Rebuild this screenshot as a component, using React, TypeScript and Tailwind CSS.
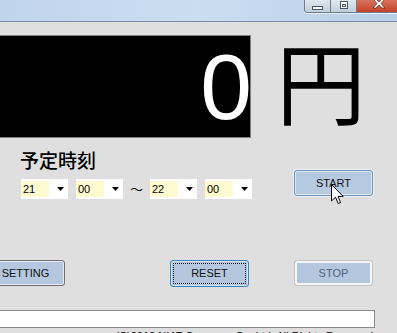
import React from "react";

function Combo({ v }: { v: string }) {
  return (
    <div className="w-[47px] h-[20px] bg-white flex items-center shrink-0">
      <div className="w-[28px] h-[16px] bg-[#fffad0] text-[11px] leading-[16px] pl-[2px] text-black">
        {v}
      </div>
      <svg className="ml-[8px]" width="7" height="4" viewBox="0 0 7 4">
        <path d="M0 0H7L3.5 4Z" fill="#000" />
      </svg>
    </div>
  );
}

function TitleBar() {
  return (
    <div className="h-[22px] border-b border-[#7a8ca0] bg-gradient-to-r from-[#bfd5ec] via-[#cadef1] to-[#b8cfe8] flex justify-end items-start">
      <div className="flex h-[13px] mr-[-3px] rounded-bl-[4px] overflow-hidden border-l border-b border-[#6e7c8c] shadow-[0_1px_0_#e6eef7]">
        <div className="w-[26px] h-full bg-gradient-to-b from-[#dfe6ee] to-[#c3cfdc] border-r border-[#6e7c8c] flex items-center justify-center">
          <div className="w-[11px] h-[4px] bg-white border border-[#4a5563] mt-[3px]" />
        </div>
        <div className="w-[26px] h-full bg-gradient-to-b from-[#dfe6ee] to-[#c3cfdc] border-r border-[#6e7c8c] flex items-start justify-center">
          <div className="w-[8px] h-[8px] bg-white border border-[#4a5563] mt-[1px] flex items-center justify-center">
            <div className="w-[4px] h-[3px] border border-[#4a5563]" />
          </div>
        </div>
        <div className="w-[43px] h-full bg-gradient-to-b from-[#d9735c] to-[#c33f27] flex items-start justify-center">
          <svg width="16" height="10" viewBox="0 0 16 10" className="mt-[-1px]">
            <path d="M2 0L6 4.5L2 9H5L8 6L11 9H14L10 4.5L14 0H11L8 3L5 0Z" fill="#fff" stroke="#5a2a22" strokeWidth="0.8" />
          </svg>
        </div>
      </div>
    </div>
  );
}

export default function App() {
  return (
    <div className="w-[397px] h-[333px] overflow-hidden bg-[#dfdfdf] relative font-['Liberation_Sans',Arial,sans-serif]">
      <TitleBar />
      <div className="flex items-start mt-[13px]">
        <div className="w-[251px] h-[103px] bg-black border-y border-r border-[#808080] flex items-center justify-end overflow-hidden shrink-0">
          <span className="text-white text-[93px] leading-[100px] mr-[-2px]">0</span>
        </div>
        <span className="ml-[25px] mt-[-1px] text-[90px] leading-none font-['Noto_Sans_CJK_JP',sans-serif] text-black">
          円
        </span>
      </div>
      <div className="mt-[12px] ml-[20px] h-[20px] text-[19px] leading-[20px] font-medium text-black font-['Noto_Sans_CJK_JP',sans-serif]">
        予定時刻
      </div>
      <div className="flex items-start">
        <div className="flex items-center mt-[9px] ml-[21px]">
          <Combo v="21" />
          <div className="ml-[8px]">
            <Combo v="00" />
          </div>
          <div className="w-[27px] text-center text-[13px] leading-[20px] text-black font-['Noto_Sans_CJK_JP',sans-serif]">～</div>
          <Combo v="22" />
          <div className="ml-[8px]">
            <Combo v="00" />
          </div>
        </div>
        <button className="ml-[42px] w-[79px] h-[26px] rounded-[3px] border border-[#6f93b8] bg-[#b5c9e0] shadow-[inset_0_0_0_1px_#dfe9f5,0_0_0_1px_#e9f1f9] text-[11px] text-[#111]">
          START
        </button>
      </div>
      <div className="flex items-start mt-[61px]">
        <button className="ml-[-14px] w-[79px] h-[26px] rounded-[3px] border border-[#707070] bg-[#b5c7de] shadow-[inset_0_0_0_1px_#e9eef5] text-[11px] text-[#111] shrink-0">
          SETTING
        </button>
        <button className="ml-[105px] w-[79px] h-[27px] rounded-[3px] border border-[#3c86be] bg-[#b5c7de] shadow-[inset_0_0_0_1px_#cfe3f3] outline-1 outline-dotted outline-black outline-offset-[-4px] text-[11px] text-[#111] shrink-0">
          RESET
        </button>
        <button className="ml-[45px] w-[79px] h-[26px] rounded-[3px] border border-[#c4c4c4] bg-[#b5c7de] shadow-[inset_0_0_0_2px_#f6f6f6] text-[11px] text-[#50627c] shrink-0">
          STOP
        </button>
      </div>
      <div className="mt-[23px] ml-[-2px] w-[377px] h-[18px] bg-white border border-[#8a8a8a]" />
      <div className="text-right pr-[24px] text-[11px] leading-[14px] text-black mt-[1px] whitespace-nowrap">
        (C)2012 NIAT Company Co.,Ltd. All Rights Reserved
      </div>
      <svg className="absolute left-[331px] top-[184px]" width="13" height="21" viewBox="0 0 13 21">
        <path d="M0.5 0.5V17L4.5 13.2L7.2 19.5L9.6 18.5L7 12.4H12.2Z" fill="#fff" stroke="#000" strokeWidth="1" strokeLinejoin="miter" />
      </svg>
    </div>
  );
}
